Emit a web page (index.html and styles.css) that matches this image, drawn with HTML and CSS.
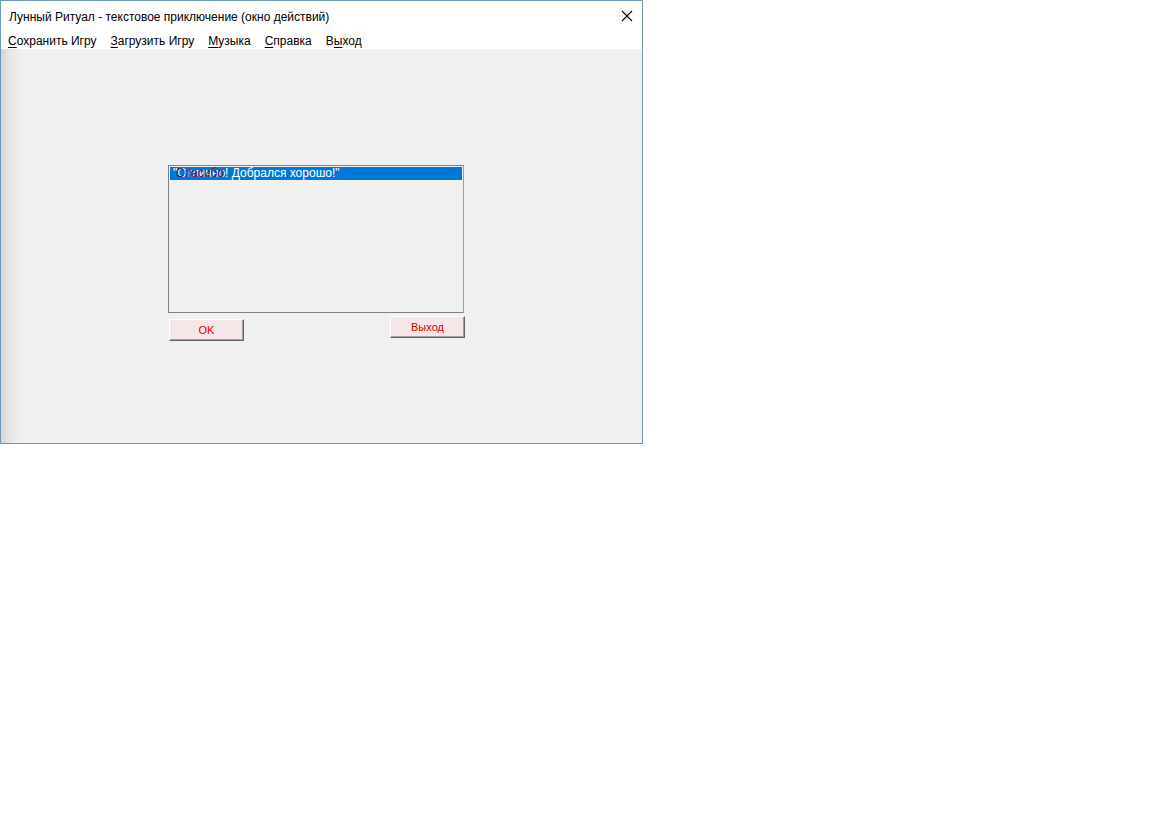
FILE: index.html
```html
<!DOCTYPE html>
<html lang="ru">
<head>
  <meta charset="UTF-8">
  <title>Лунный Ритуал</title>
  <link rel="stylesheet" href="styles.css">
</head>
<body>
  <div class="window">
    <div class="titlebar">
      <span class="title">Лунный Ритуал - текстовое приключение (окно действий)</span>
      <svg class="close" width="12" height="12" viewBox="0 0 12 12">
        <path d="M1 1 L11 11 M11 1 L1 11" stroke="#000" stroke-width="1.1" fill="none" />
      </svg>
    </div>

    <div class="menubar">
      <span class="menu-item"><u>С</u>охранить Игру</span>
      <span class="menu-item"><u>З</u>агрузить Игру</span>
      <span class="menu-item"><u>М</u>узыка</span>
      <span class="menu-item"><u>С</u>правка</span>
      <span class="menu-item">В<u>ы</u>ход</span>
    </div>

    <div class="client">
      <div class="form">
        <div class="listbox">
          <div class="row selected">
            <span class="row-text">"Отлично! Добрался хорошо!"</span>
            <span class="ghost">Спасибо</span>
          </div>
        </div>
        <div class="buttons">
          <button class="btn btn-ok">OK</button>
          <button class="btn btn-exit">Выход</button>
        </div>
      </div>
    </div>
  </div>
</body>
</html>
```

FILE: styles.css
```css
body {
  margin: 0;
  background: #fff;
  font-family: "Liberation Sans", Arial, sans-serif;
}
.window {
  width: 641px;
  height: 442px;
  border: 1px solid #6b98b9;
  display: flex;
  flex-direction: column;
  background: #fff;
}
.titlebar {
  height: 30px;
  display: flex;
  align-items: center;
  justify-content: space-between;
  padding: 0 9px 0 8px;
}
.title {
  font-size: 12px;
  color: #000;
  margin-top: 1px;
}
.close {
  display: block;
}
.menubar {
  height: 18px;
  display: flex;
  align-items: center;
  gap: 14px;
  padding: 2px 0 0 7px;
  box-sizing: border-box;
  font-size: 12px;
  color: #000;
}
.menu-item u {
  text-decoration-thickness: 1px;
  text-underline-offset: 2px;
}
.client {
  flex: 1;
  background: linear-gradient(to right, #d4d4d4 0px, #e6e6e6 8px, #f0f0f0 20px);
  padding: 116px 0 0 167px;
}
.form {
  width: 297px;
}
.listbox {
  width: 292px;
  height: 144px;
  border: 1px solid #828282;
  border-right-color: #a0a0a0;
  padding: 1px;
  background: #f0f0f0;
}
.row {
  position: relative;
  height: 13px;
  font-size: 12px;
  line-height: 13px;
  padding-left: 3px;
  white-space: nowrap;
}
.row.selected {
  background: #0078d7;
  color: #fff;
}
/* second string drawn over the first one */
.ghost {
  position: absolute;
  left: 6px;
  top: 0;
  color: #5e1858;
}
.buttons {
  display: flex;
  justify-content: space-between;
  align-items: flex-start;
  margin-top: 3px;
}
.btn {
  width: 75px;
  height: 22px;
  background: #f7e6e8;
  color: #e00000;
  font-family: "Liberation Sans", Arial, sans-serif;
  font-size: 11px;
  border: 1px solid;
  border-color: #fff #646464 #646464 #fff;
  box-shadow: inset -1px -1px 0 #a0a0a0;
  padding: 0;
}
.btn-ok {
  margin-top: 3px;
  margin-left: 1px;
}
```
